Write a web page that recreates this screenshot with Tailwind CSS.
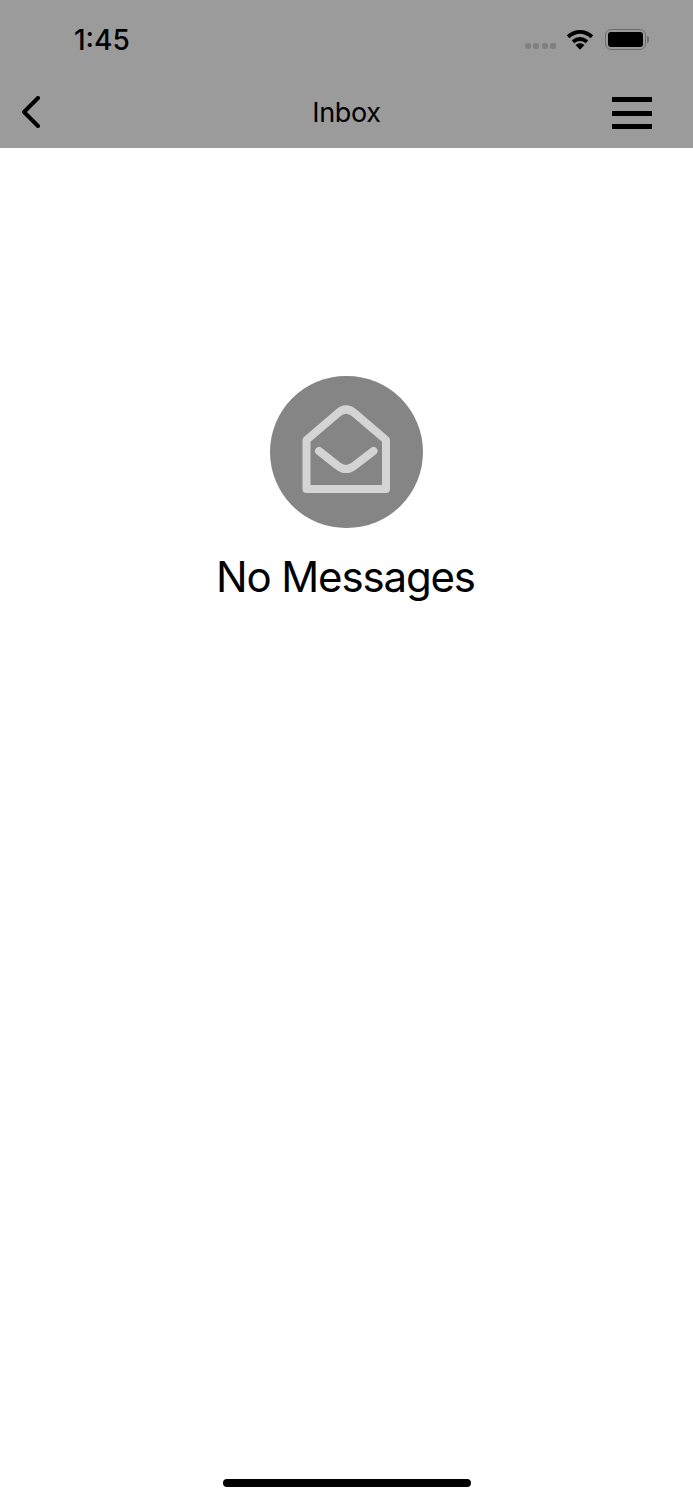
<!DOCTYPE html>
<html lang="en">
<head>
    <meta charset="UTF-8">
    <meta name="viewport" content="width=device-width, initial-scale=1.0">
    <title>Inbox</title>
    <script src="https://cdn.jsdelivr.net/npm/@tailwindcss/browser@4"></script>
</head>
<body class="bg-white text-black font-['Inter','Liberation_Sans',sans-serif]">
    <div class="h-[1500px] w-[693px] flex flex-col overflow-hidden">
        <!-- status bar + nav -->
        <header class="h-[148px] bg-[#9b9b9b] shrink-0 flex flex-col">
            <div class="h-[78px] flex items-start justify-between pt-[24px] pl-[74px] pr-[44px]">
                <span class="text-[28px] leading-[33px] font-medium">1:45</span>
                <div class="flex items-start gap-[10px] pt-[5px]">
                    <div class="flex gap-[2.5px] mt-[14px]">
                        <span class="w-[6px] h-[6px] rounded-[2px] bg-[#808080]"></span>
                        <span class="w-[6px] h-[6px] rounded-[2px] bg-[#808080]"></span>
                        <span class="w-[6px] h-[6px] rounded-[2px] bg-[#808080]"></span>
                        <span class="w-[6px] h-[6px] rounded-[2px] bg-[#808080]"></span>
                    </div>
                    <svg class="w-[28px] h-[21px] mr-[1px]" viewBox="0 0 28 21" fill="none">
                        <path d="M2 7.800C9.500 1.400 18.500 1.400 26 7.800" stroke="#000" stroke-width="4"/>
                        <path d="M7 12.800C11.500 9.200 16.500 9.200 21 12.800" stroke="#000" stroke-width="3.800"/>
                        <path d="M9.500 16L14 20.800L18.500 16C15.500 13.700 12.500 13.700 9.500 16Z" fill="#000"/>
                    </svg>
                    <div class="flex items-center">
                        <div class="w-[41px] h-[21px] rounded-[6px] border-[1.5px] border-[#6e6e6e] p-[2px]">
                            <div class="w-full h-full rounded-[3px] bg-black"></div>
                        </div>
                        <span class="w-[2px] h-[7px] ml-[1px] rounded-r-[2px] bg-[#6e6e6e]"></span>
                    </div>
                </div>
            </div>
            <nav class="flex-1 relative flex items-start justify-between pl-[22px] pr-[41px] pt-[19px]">
                <svg class="w-[18px] h-[32px] -mt-[1px]" viewBox="0 0 18 32" fill="none">
                    <path d="M16 2L2 16L16 30" stroke="#000" stroke-width="4" stroke-linecap="round" stroke-linejoin="round"/>
                </svg>
                <h1 class="absolute left-0 right-0 top-[17px] text-center text-[27px] leading-[36px] font-normal tracking-[-0.3px]">Inbox</h1>
                <div class="w-[40px] flex flex-col gap-[8.500px]">
                    <span class="h-[5px] bg-black"></span>
                    <span class="h-[5px] bg-black"></span>
                    <span class="h-[5px] bg-black"></span>
                </div>
            </nav>
        </header>

        <!-- empty state -->
        <main class="flex-1 flex flex-col items-center pt-[228px]">
            <div class="w-[153px] h-[152px] rounded-full bg-[#858585]">
                <svg class="w-[153px] h-[152px]" viewBox="0 0 153 152" fill="none">
                    <path d="M36.500 64L67.500 37.500Q76 29.500 85 37.500L116 64V113H36.500Z" stroke="#d4d4d4" stroke-width="8" stroke-linejoin="round"/>
                    <path d="M49 75L68 90Q76 96 84 90L103.500 75" stroke="#d4d4d4" stroke-width="8" stroke-linecap="round" stroke-linejoin="round"/>
                </svg>
            </div>
            <p class="mt-[22px] pr-[2px] text-[42px] leading-[54px] font-normal tracking-[-1.15px]">No Messages</p>
        </main>

        <!-- home indicator -->
        <div class="h-[21px] shrink-0 flex justify-center">
            <span class="w-[248px] h-[8px] rounded-full bg-black"></span>
        </div>
    </div>
</body>
</html>
